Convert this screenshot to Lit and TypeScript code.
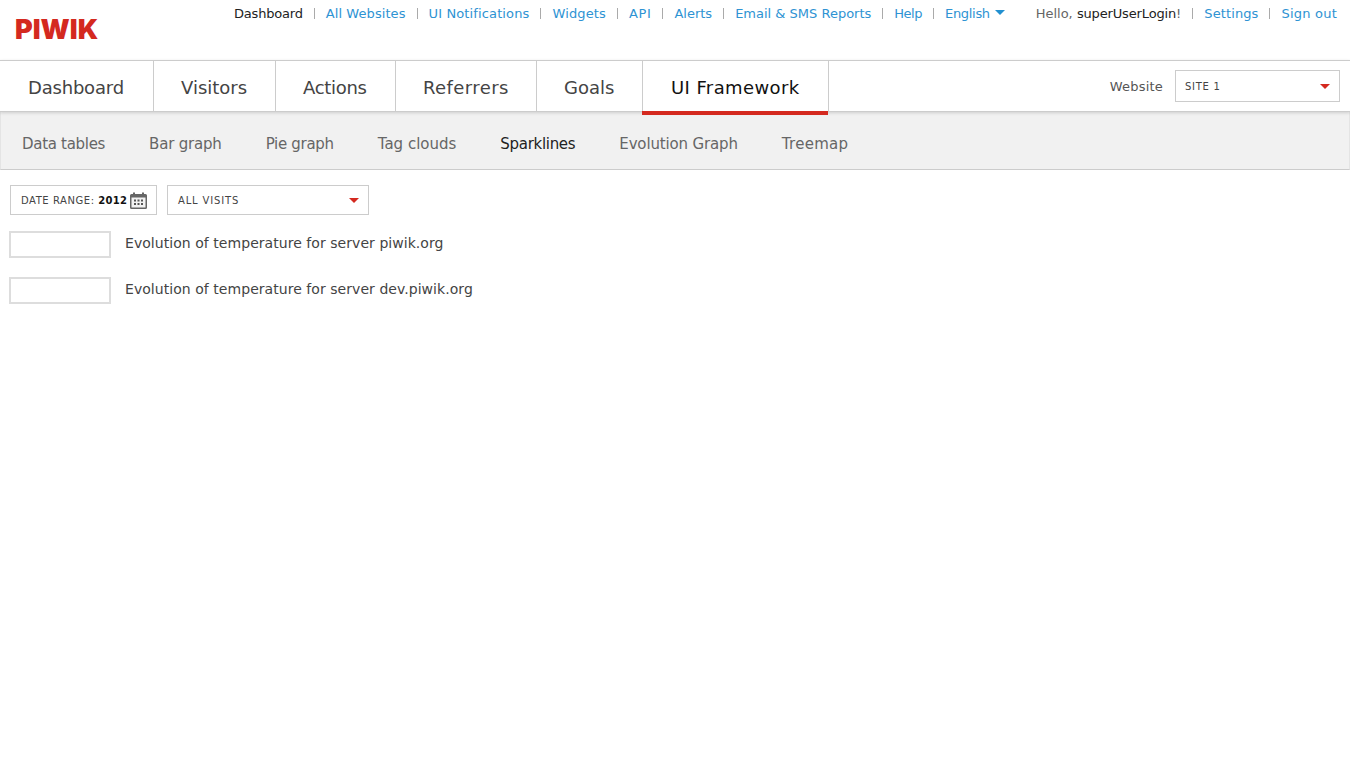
import { LitElement, css, html } from 'lit';
import { customElement } from 'lit/decorators.js';

// spacing per label: the screenshot's font has whole-pixel advances, so widths differ a bit by word
type Item = { label: string; ls: number; width?: number; pad?: number };

const TOP_LINKS: Item[] = [
  { label: 'All Websites', ls: 0.08 },
  { label: 'UI Notifications', ls: 0.13 },
  { label: 'Widgets', ls: 0.14 },
  { label: 'API', ls: 0.6 },
  { label: 'Alerts', ls: 0 },
  { label: 'Email & SMS Reports', ls: 0 },
  { label: 'Help', ls: -0.5 },
  { label: 'English', ls: -0.3 },
];
const TABS: Item[] = [
  { label: 'Dashboard', ls: -0.2, width: 154, pad: 28 },
  { label: 'Visitors', ls: 0, width: 122, pad: 27 },
  { label: 'Actions', ls: -0.3, width: 120, pad: 27 },
  { label: 'Referrers', ls: 0.4, width: 141, pad: 27 },
  { label: 'Goals', ls: 0, width: 106, pad: 27 },
  { label: 'UI Framework', ls: 0.4, width: 186, pad: 28 },
];
const SUB_TABS: Item[] = [
  { label: 'Data tables', ls: -0.3 },
  { label: 'Bar graph', ls: -0.2 },
  { label: 'Pie graph', ls: -0.3 },
  { label: 'Tag clouds', ls: 0 },
  { label: 'Sparklines', ls: -0.3 },
  { label: 'Evolution Graph', ls: -0.15 },
  { label: 'Treemap', ls: 0.28 },
];
const SPARKLINES = ['Evolution of temperature for server piwik.org', 'Evolution of temperature for server dev.piwik.org'];

const spaced = (item: Item) => `letter-spacing:${item.ls}px`;

@customElement('app-root')
export class AppRoot extends LitElement {
  static styles = css`
    :host {
      display: block;
      min-height: 768px;
      background: #fff;
      font-family: 'DejaVu Sans', Verdana, sans-serif;
      color: #444;
    }

    /* top strip */
    .header {
      display: flex;
      height: 60px;
      font-size: 13px;
    }
    .logo {
      width: 234px;
      box-sizing: border-box;
      padding: 13px 0 0 15px;
      font-family: 'Inter', 'Liberation Sans', sans-serif;
      font-size: 27px;
      line-height: 34px;
      font-weight: 900;
      color: #d4291f;
    }
    .top-menu,
    .user-menu {
      display: flex;
      height: 27px;
      align-items: center;
    }
    .user-menu {
      margin-left: auto;
      margin-right: 13px;
    }
    .sep {
      width: 1px;
      height: 11px;
      margin: 0 11px;
      background: #aaa;
    }
    .link {
      color: #2e93d3;
    }
    .current {
      color: #222;
    }
    .muted {
      color: #666;
    }
    .lang-arrow {
      width: 0;
      height: 0;
      margin: -3px 0 0 5px;
      border-left: 5px solid transparent;
      border-right: 5px solid transparent;
      border-top: 5px solid #2290d0;
    }

    /* main tabs */
    .nav {
      display: flex;
      height: 52px;
      box-sizing: border-box;
      border-top: 1px solid #ccc;
      border-bottom: 1px solid #ccc;
      box-shadow: 0 1px 3px rgba(0, 0, 0, 0.15);
      position: relative;
      background: #fff;
    }
    .tab {
      position: relative;
      box-sizing: border-box;
      border-right: 1px solid #ccc;
      font-size: 18px;
      line-height: 53px;
      color: #444;
    }
    .tab.active {
      color: #111;
    }
    .tab.active::after {
      content: '';
      position: absolute;
      left: -1px;
      right: 0;
      bottom: -4px;
      height: 4px;
      background: #d4291f;
    }
    .site-picker {
      display: flex;
      align-items: center;
      margin-left: auto;
      margin-right: 10px;
      font-size: 13px;
    }
    .site-label {
      margin-right: 12px;
      padding-top: 1px;
      letter-spacing: 0.2px;
      color: #555;
    }
    .select {
      display: flex;
      align-items: center;
      justify-content: space-between;
      box-sizing: border-box;
      border: 1px solid #ccc;
      background: #fff;
      font-size: 10px;
      letter-spacing: 0.55px;
      color: #444;
      text-transform: uppercase;
    }
    .site-select {
      width: 165px;
      height: 32px;
      padding: 0 9px;
      letter-spacing: 0.7px;
    }
    .arrow {
      width: 0;
      height: 0;
      border-left: 5px solid transparent;
      border-right: 5px solid transparent;
      border-top: 5px solid #d4291f;
    }

    /* secondary tabs */
    .subnav {
      display: flex;
      gap: 44px;
      height: 58px;
      box-sizing: border-box;
      padding-left: 21px;
      background: #f1f1f1;
      border: 1px solid #e4e4e4;
      border-top: 0;
      border-bottom: 1px solid #ccc;
      font-size: 15px;
      line-height: 64px;
      color: #666;
    }
    .subnav .active {
      color: #222;
    }

    /* content */
    .filters {
      display: flex;
      gap: 10px;
      padding: 15px 0 0 10px;
    }
    .date {
      width: 147px;
      height: 30px;
      padding: 0 9px 0 10px;
    }
    .date b {
      font-weight: 700;
      color: #111;
      letter-spacing: 0.3px;
    }
    .date svg {
      display: block;
      margin-top: 1px;
    }
    .segment {
      width: 202px;
      height: 30px;
      padding: 0 9px 0 10px;
      letter-spacing: 0.85px;
    }
    .rows {
      padding: 16px 0 0 9px;
    }
    .row {
      display: flex;
      gap: 14px;
      height: 27px;
      margin-bottom: 19px;
      font-size: 14px;
      line-height: 25px;
      letter-spacing: 0.05px;
      color: #444;
    }
    .spark {
      width: 102px;
      height: 27px;
      box-sizing: border-box;
      border: 2px solid #ddd;
    }
  `;

  render() {
    return html`
      <div class="header">
        <div class="logo">PIWIK</div>
        <div class="top-menu">
          <span class="current" style="letter-spacing:-0.2px">Dashboard</span>
          ${TOP_LINKS.map(l => html`<span class="sep"></span><span class="link" style=${spaced(l)}>${l.label}</span>`)}
          <span class="lang-arrow"></span>
        </div>
        <div class="user-menu">
          <span class="muted">Hello, <span class="current" style="letter-spacing:-0.15px">superUserLogin</span>!</span>
          <span class="sep"></span><span class="link" style="letter-spacing:0.1px">Settings</span>
          <span class="sep"></span><span class="link" style="letter-spacing:0.22px">Sign out</span>
        </div>
      </div>
      <div class="nav">
        ${TABS.map((t, i) => html`<div class="tab ${i === 5 ? 'active' : ''}" style="width:${t.width}px;padding-left:${t.pad}px;${spaced(t)}">${t.label}</div>`)}
        <div class="site-picker">
          <span class="site-label">Website</span>
          <div class="select site-select"><span>Site 1</span><span class="arrow"></span></div>
        </div>
      </div>
      <div class="subnav">
        ${SUB_TABS.map((t, i) => html`<span class=${i === 4 ? 'active' : ''} style=${spaced(t)}>${t.label}</span>`)}
      </div>
      <div class="filters">
        <div class="select date">
          <span>Date range: <b>2012</b></span>
          <svg width="17" height="17" viewBox="0 0 17 17">
            <path fill="#666" d="M1.5 2H3V0.5h2V2h7V0.5h2V2h1.5A1.5 1.5 0 0 1 17 3.5v12a1.5 1.5 0 0 1-1.5 1.5h-14A1.5 1.5 0 0 1 0 15.5v-12A1.5 1.5 0 0 1 1.5 2z" />
            <rect x="1.5" y="5.5" width="14" height="10" fill="#f2f2f2" />
            <path fill="#555" d="M4 7.5h2v2H4zM7.5 7.5h2v2h-2zM11 7.5h2v2h-2zM4 11h2v2H4zM7.5 11h2v2h-2zM11 11h2v2h-2z" />
          </svg>
        </div>
        <div class="select segment"><span>All visits</span><span class="arrow"></span></div>
      </div>
      <div class="rows">
        ${SPARKLINES.map(s => html`<div class="row"><div class="spark"></div><span>${s}</span></div>`)}
      </div>
    `;
  }
}
